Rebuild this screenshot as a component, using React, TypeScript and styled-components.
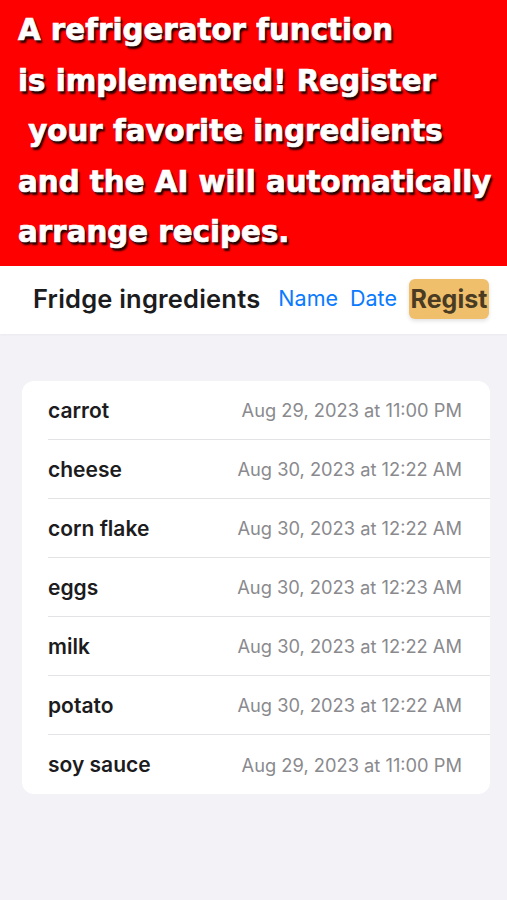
import React from 'react';
import styled, { createGlobalStyle } from 'styled-components';

const GlobalStyle = createGlobalStyle`
    html, body {
        margin: 0;
        padding: 0;
        background: #f2f2f7;
    }
    body {
        font-family: 'Liberation Sans', Arial, sans-serif;
    }
`;

const items = [
    { name: 'carrot', date: 'Aug 29, 2023 at 11:00 PM' },
    { name: 'cheese', date: 'Aug 30, 2023 at 12:22 AM' },
    { name: 'corn flake', date: 'Aug 30, 2023 at 12:22 AM' },
    { name: 'eggs', date: 'Aug 30, 2023 at 12:23 AM' },
    { name: 'milk', date: 'Aug 30, 2023 at 12:22 AM' },
    { name: 'potato', date: 'Aug 30, 2023 at 12:22 AM' },
    { name: 'soy sauce', date: 'Aug 29, 2023 at 11:00 PM' },
];

const bannerLines = [
    'A refrigerator function',
    'is implemented! Register',
    ' your favorite ingredients',
    'and the AI will automatically',
    'arrange recipes.',
];

const App = () => {
    return (
        <>
            <GlobalStyle />
            <Page>
                <Banner>
                    {bannerLines.map((line) => (
                        <BannerLine key={line}>{line}</BannerLine>
                    ))}
                </Banner>
                <Header>
                    <Title>Fridge ingredients</Title>
                    <SortLink>Name</SortLink>
                    <SortLink>Date</SortLink>
                    <RegistButton>Regist</RegistButton>
                </Header>
                <Content>
                    <Card>
                        {items.map((item, i) => (
                            <Row key={item.name} last={i === items.length - 1}>
                                <ItemName>{item.name}</ItemName>
                                <ItemDate>{item.date}</ItemDate>
                            </Row>
                        ))}
                    </Card>
                </Content>
            </Page>
        </>
    );
};

const Page = styled.div`
    width: 507px;
    min-height: 900px;
    background: #f2f2f7;
`;

const Banner = styled.div`
    height: 266px;
    background: #ff0000;
    padding: 5px 0 0 18px;
    box-sizing: border-box;
    display: flex;
    flex-direction: column;
`;

const BannerLine = styled.div`
    white-space: pre;
    color: #ffffff;
    font-family: 'DejaVu Sans', 'Liberation Sans', sans-serif;
    font-weight: 700;
    font-size: 29.3px;
    line-height: 50.5px;
    -webkit-text-stroke: 0.7px #ffffff;
    text-shadow: 2px 3px 2px rgba(0, 0, 0, 0.85), 1px 1px 1px rgba(0, 0, 0, 0.6);
`;

const Header = styled.div`
    height: 68px;
    background: #ffffff;
    display: flex;
    align-items: center;
    padding: 0 17px 4px 33px;
    box-sizing: border-box;
    box-shadow: 0 1px 2px rgba(0, 0, 0, 0.04);
`;

const Title = styled.div`
    font-family: 'Inter', 'Liberation Sans', sans-serif;
    font-weight: 600;
    font-size: 25.5px;
    letter-spacing: 0.2px;
    color: #1c1c1e;
    margin-right: 18px;
    white-space: nowrap;
`;

const SortLink = styled.div`
    font-family: 'Inter', 'Liberation Sans', sans-serif;
    font-size: 21.5px;
    color: #0a7aff;
    margin-right: 12px;
    white-space: nowrap;
`;

const RegistButton = styled.div`
    margin-top: 2px;
    height: 40px;
    width: 80px;
    flex-shrink: 0;
    box-sizing: border-box;
    display: flex;
    align-items: center;
    justify-content: center;
    background: #f0bf6c;
    border-radius: 6px;
    box-shadow: 0 2px 4px rgba(0, 0, 0, 0.12);
    font-family: 'Inter', 'Liberation Sans', sans-serif;
    font-weight: 700;
    font-size: 25px;
    color: #4a3b23;
`;

const Content = styled.div`
    padding: 47px 17px 0 22px;
`;

const Card = styled.div`
    background: #ffffff;
    border-radius: 12px;
    padding-left: 26px;
    overflow: hidden;
`;

const Row = styled.div<{ last: boolean }>`
    height: 59px;
    display: flex;
    align-items: center;
    justify-content: space-between;
    padding-right: 28px;
    box-sizing: border-box;
    border-bottom: ${(p) => (p.last ? 'none' : '1px solid #e3e3e6')};
`;

const ItemName = styled.div`
    font-family: 'Inter', 'Liberation Sans', sans-serif;
    font-weight: 600;
    font-size: 21px;
    color: #1c1c1e;
`;

const ItemDate = styled.div`
    font-family: 'Inter', 'Liberation Sans', sans-serif;
    font-size: 18.3px;
    color: #8a8a8e;
`;

export default App;
